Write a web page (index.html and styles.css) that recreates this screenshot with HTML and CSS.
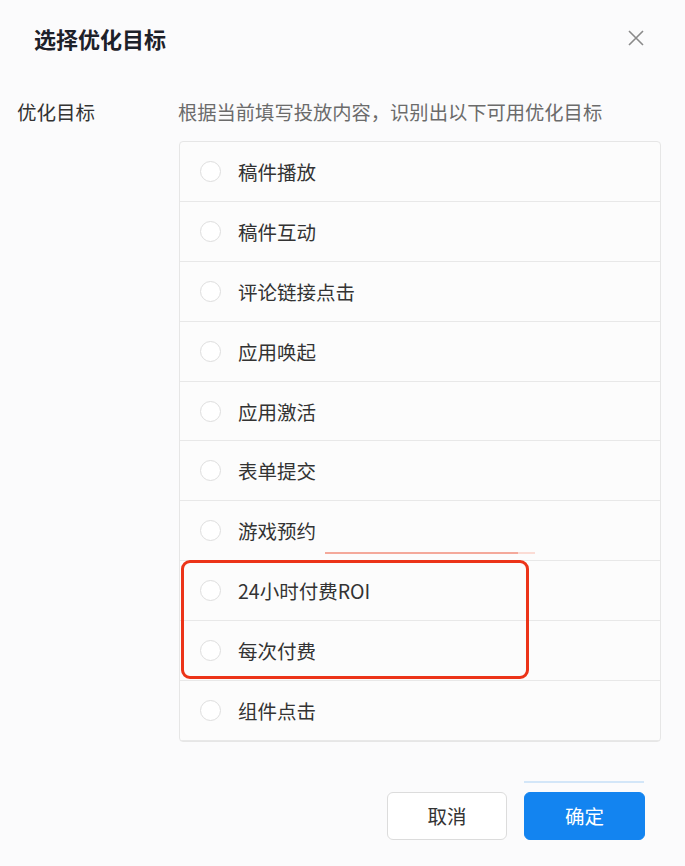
FILE: index.html
```html
<!DOCTYPE html>
<html lang="zh-CN">
<head>
<meta charset="utf-8">
<title>选择优化目标</title>
<link rel="stylesheet" href="styles.css">
</head>
<body>
<div class="dialog">
  <div class="header">
    <h1 class="title">选择优化目标</h1>
    <span class="close" aria-label="关闭">
      <svg width="16" height="16" viewBox="0 0 16 16"><path d="M1 1L15 15M15 1L1 15" stroke="#8a8a8a" stroke-width="1.6" fill="none"/></svg>
    </span>
  </div>
  <div class="form">
    <div class="label">优化目标</div>
    <div class="content">
      <div class="desc">根据当前填写投放内容，识别出以下可用优化目标</div>
      <div class="list">
        <div class="row"><span class="radio"></span><span class="text">稿件播放</span></div>
        <div class="row"><span class="radio"></span><span class="text">稿件互动</span></div>
        <div class="row"><span class="radio"></span><span class="text">评论链接点击</span></div>
        <div class="row"><span class="radio"></span><span class="text">应用唤起</span></div>
        <div class="row"><span class="radio"></span><span class="text">应用激活</span></div>
        <div class="row"><span class="radio"></span><span class="text">表单提交</span></div>
        <div class="row"><span class="radio"></span><span class="text">游戏预约</span></div>
        <div class="row"><span class="radio"></span><span class="text">24小时付费ROI</span></div>
        <div class="row"><span class="radio"></span><span class="text">每次付费</span></div>
        <div class="row"><span class="radio"></span><span class="text">组件点击</span></div>
        <div class="underline"></div>
        <div class="highlight"></div>
      </div>
    </div>
  </div>
  <div class="footer">
    <button class="btn btn-cancel">取消</button>
    <button class="btn btn-ok">确定</button>
    <div class="blue-line"></div>
  </div>
</div>
</body>
</html>
```

FILE: styles.css
```css
* { box-sizing: border-box; }
html, body {
  margin: 0;
  padding: 0;
  background: #fbfbfc;
  font-family: "Noto Sans CJK SC", "Noto Sans", sans-serif;
  color: #333;
}
.dialog {
  width: 685px;
  height: 866px;
  position: relative;
}
.header {
  display: flex;
  justify-content: space-between;
  align-items: flex-start;
  padding: 22px 41px 0 34px;
  height: 76px;
}
.title {
  margin: 0;
  font-size: 22px;
  line-height: 32px;
  font-weight: 600;
  color: #1d2129;
}
.close {
  display: flex;
  margin-top: 8px;
}
.form {
  display: grid;
  grid-template-columns: 162px 482px;
  padding: 22px 0 0 17px;
}
.label {
  font-size: 19.5px;
  line-height: 28px;
  color: #333;
}
.content {
  display: flex;
  flex-direction: column;
}
.desc {
  font-size: 19.3px;
  line-height: 28px;
  color: #6b6b6b;
  margin-bottom: 15px;
  margin-left: -1px;
}
.list {
  position: relative;
  border: 1px solid #e6e6e6;
  border-radius: 4px;
  background: #fcfcfc;
}
.row {
  display: flex;
  align-items: center;
  height: 59.9px;
  padding-left: 20px;
  border-bottom: 1px solid #e8e8e8;
}
.row:last-of-type { border-bottom: none; }
.radio {
  width: 21px;
  height: 21px;
  border-radius: 50%;
  border: 1px solid #dedede;
  background: #fff;
  flex: none;
}
.text {
  margin-left: 17px;
  font-size: 19.5px;
  color: #333;
}
.underline {
  position: absolute;
  left: 145px;
  top: 410px;
  width: 210px;
  height: 2px;
  background: linear-gradient(to right, #f4a99b 0, #f4a99b 92%, #fbdcd5 92%);
}
.highlight {
  position: absolute;
  left: 1px;
  top: 418px;
  width: 348px;
  height: 119px;
  border: 3px solid #ec3418;
  border-radius: 9px;
}
.footer {
  position: relative;
  display: flex;
  justify-content: flex-end;
  gap: 17px;
  padding: 50px 40px 0 0;
}
.btn {
  width: 120px;
  height: 48px;
  border-radius: 6px;
  font-family: inherit;
  font-size: 19.5px;
  cursor: pointer;
}
.btn-cancel {
  background: #fff;
  border: 1px solid #dcdcdc;
  color: #333;
}
.btn-ok {
  width: 121px;
  background: #1384f0;
  border: 1px solid #1384f0;
  color: #fff;
}
.blue-line {
  position: absolute;
  right: 41px;
  top: 39px;
  width: 120px;
  height: 2px;
  background: #d3e6f8;
}
```
